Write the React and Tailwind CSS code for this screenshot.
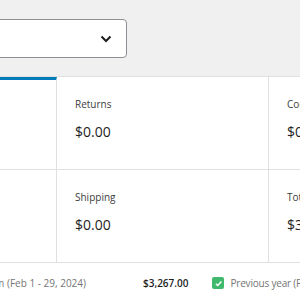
import React from 'react';

const cells = [
  [
    { label: 'Net sales', value: '$3,267.00', active: true },
    { label: 'Returns', value: '$0.00' },
    { label: 'Coupons', value: '$0.00' },
  ],
  [
    { label: 'Taxes', value: '$0.00' },
    { label: 'Shipping', value: '$0.00' },
    { label: 'Total sales', value: '$3,267.00' },
  ],
];

const Cell = ({ label, value, active, last }) => (
  <div
    className={`h-[93px] border-b border-[#e0e0e0] ${last ? '' : 'border-r'} ${
      active ? 'border-t-[3px] border-t-[#007cba] pt-[16px]' : 'pt-[19px]'
    } pl-[18px]`}
  >
    <div className="text-[10px] leading-[16px] text-[#3c3c3c] whitespace-nowrap">{label}</div>
    <div className="mt-[10px] text-[14px] leading-[20px] text-[#1e1e1e] whitespace-nowrap">{value}</div>
  </div>
);

export default function App() {
  return (
    <div
      className="w-[300px] h-[300px] overflow-hidden bg-[#f0f0f0]"
      style={{ fontFamily: '"Open Sans", "Noto Sans", sans-serif' }}
    >
      <div className="h-[76px] pt-[19px]">
        <div className="ml-[-100px] w-[227px] h-[39px] bg-white border border-[#8c8f94] rounded-[4px] flex items-center justify-end pr-[14px]">
          <svg width="12" height="8" viewBox="0 0 12 8" fill="none">
            <path d="M1.5 1.5 L6 6 L10.5 1.5" stroke="#1e1e1e" strokeWidth="2" />
          </svg>
        </div>
      </div>
      <div className="bg-white border-t border-[#e0e0e0]">
        <div className="ml-[-155px] w-[700px] grid grid-cols-[212px_212px_276px]">
          {cells.flat().map((c, i) => (
            <Cell key={i} {...c} last={i % 3 === 2} />
          ))}
        </div>
        <div className="h-[40px] flex items-center text-[10px] whitespace-nowrap">
          <div className="w-[86px] flex justify-end shrink-0">
            <span className="text-[#757575]">Custom (Feb 1 - 29, 2024)</span>
          </div>
          <span className="ml-[57px] font-semibold text-[#1e1e1e]">$3,267.00</span>
          <span className="ml-[24px] w-[12px] h-[12px] bg-[#3fb96c] rounded-[2px] flex items-center justify-center shrink-0">
            <svg width="9" height="9" viewBox="0 0 10 10" fill="none">
              <path d="M2 5.2 L4.2 7.3 L8.2 2.8" stroke="white" strokeWidth="1.6" />
            </svg>
          </span>
          <span className="ml-[6px] text-[#757575] tracking-[-0.2px]">Previous year (Feb 1 - 29, 2023)</span>
        </div>
      </div>
    </div>
  );
}
